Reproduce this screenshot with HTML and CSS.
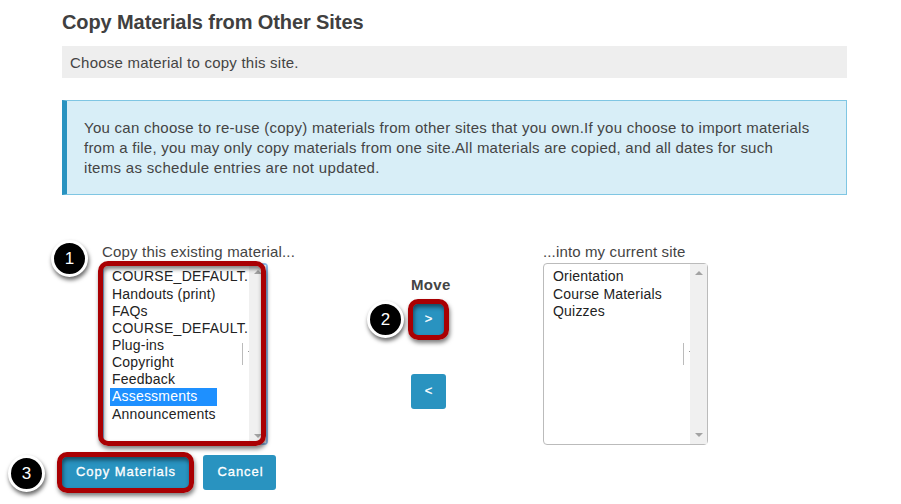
FILE: index.html
```html
<!DOCTYPE html>
<html lang="en">
<head>
<meta charset="utf-8">
<title>Copy Materials from Other Sites</title>
<link rel="stylesheet" href="styles.css">
</head>
<body>
<main class="page">
  <h1>Copy Materials from Other Sites</h1>
  <p class="instruction">Choose material to copy this site.</p>
  <div class="info">You can choose to re-use (copy) materials from other sites that you own.If you choose to import materials<br><span class="snug">from a file, you may only copy materials from one site.All materials are copied, and all dates for such</span><br><span class="loose">items as schedule entries are not updated.</span></div>
  <div class="transfer">
    <section class="source">
      <div class="label">Copy this existing material...</div>
      <div class="list focused">
        <ul class="options">
          <li class="long">COURSE_DEFAULT.</li>
          <li>Handouts (print)</li>
          <li>FAQs</li>
          <li class="long">COURSE_DEFAULT.</li>
          <li>Plug-ins</li>
          <li>Copyright</li>
          <li>Feedback</li>
          <li class="selected">Assessments</li>
          <li>Announcements</li>
        </ul>
        <div class="divider"></div>
        <div class="scrollbar"><i class="up"></i><i class="down"></i></div>
        <div class="highlight list-highlight"></div>
        <div class="badge badge-one">1</div>
      </div>
    </section>
    <section class="move">
      <div class="move-title">Move</div>
      <div class="button square">&gt;
        <div class="highlight move-highlight"></div>
        <div class="badge badge-two">2</div>
      </div>
      <div class="button square back">&lt;</div>
    </section>
    <section class="target">
      <div class="label into">...into my current site</div>
      <div class="list">
        <ul class="options">
          <li>Orientation</li>
          <li>Course Materials</li>
          <li>Quizzes</li>
        </ul>
        <div class="divider"></div>
        <div class="scrollbar"><i class="up"></i><i class="down"></i></div>
      </div>
    </section>
  </div>
  <div class="actions">
    <div class="button copy"><span>Copy Materials</span>
      <div class="highlight copy-highlight"></div>
      <div class="badge badge-three">3</div>
    </div>
    <div class="button cancel">Cancel</div>
  </div>
</main>
</body>
</html>
```
FILE: styles.css
```css
* { box-sizing: border-box; }
body {
  margin: 0;
  background: #fff;
  color: #444;
  font: 15px/20px "Liberation Sans", Arial, sans-serif;
  letter-spacing: 0.26px;
  height: 504px;
  overflow: hidden;
}
.page { width: 785px; margin-left: 62px; padding-top: 10px; }
h1 { margin: 0 0 12px; font-size: 20px; line-height: 24px; letter-spacing: -0.1px; color: #404040; white-space: nowrap; }
.instruction { margin: 0 0 22px; height: 32px; padding: 7px 8px; background: #eee; letter-spacing: 0.23px; }
.info {
  height: 95px;
  padding: 17px 0 0 17px;
  background: #d8eef7;
  border: 1px solid #7fc6e3;
  border-left: 5px solid #2993c0;
  white-space: nowrap;
}
.snug { letter-spacing: 0.23px; }
.loose { letter-spacing: 0.31px; }
.transfer { display: flex; margin-top: 47px; padding-left: 40px; height: 203px; }
.source { width: 309px; }
.move { width: 132px; }
.target { width: 165px; }
.label { height: 21px; letter-spacing: 0.18px; white-space: nowrap; }
.into { letter-spacing: 0.14px; }
.list {
  position: relative;
  display: flex;
  justify-content: flex-end;
  width: 165px;
  height: 182px;
  border: 1px solid #bbb;
  border-radius: 4px;
}
.focused { width: 166px; border: 2px solid #8fbcec; }
.options {
  flex: 1;
  min-width: 0;
  margin: 0;
  padding: 4px 0 0 8px;
  list-style: none;
  color: #222;
  font-size: 14px;
  line-height: 17.2px;
  letter-spacing: 0.2px;
  white-space: nowrap;
}
.focused .options { padding: 3px 0 0 6px; }
.options li { width: 107px; padding-left: 1px; }
.options li:nth-child(2), .options li:nth-child(3) { position: relative; top: 0.5px; }
.focused li { padding-left: 2px; }
.options .long { width: auto; letter-spacing: 0.28px; }
.options .selected { background: #1e90ff; color: #fff; }
.scrollbar {
  display: flex;
  flex-direction: column;
  justify-content: space-between;
  align-items: center;
  width: 17px;
  padding: 7px 0;
  background: #f0f0f0;
}
.scrollbar i { border: 4px solid transparent; }
.up { border-top: 0 !important; border-bottom-color: #a3a3a3 !important; }
.down { border-bottom: 0 !important; border-top-color: #a3a3a3 !important; }
.focused .scrollbar { padding: 5px 0; }
.divider { position: relative; width: 7px; height: 22px; margin-top: 79px; border-left: 1px solid #bbb; }
.focused .divider { margin-top: 78px; }
.divider::after { content: ""; position: absolute; right: 0; top: 8px; width: 1px; height: 1px; background: #999; }
.move-title { margin: 33px 0 7px; font-weight: bold; letter-spacing: 0.3px; }
.button {
  position: relative;
  height: 35px;
  border-radius: 3px;
  background: #2993c0;
  color: #fff;
  font-size: 13px;
  line-height: 34px;
  letter-spacing: 0.9px;
  text-align: center;
  white-space: nowrap;
  -webkit-text-stroke: 0.3px #fff;
}
.square { width: 35px; padding-left: 1px; }
.back { margin-top: 37px; }
.actions { display: flex; gap: 14px; margin-top: 10px; }
.copy { width: 127px; padding-left: 1px; letter-spacing: 0.95px; }
.cancel { width: 73px; padding-left: 2px; }
.highlight {
  position: absolute;
  border: 5px solid #a90003;
  border-radius: 10px;
  box-shadow: 1px 3px 4px rgba(0,0,0,.5), inset 1px 3px 4px rgba(0,0,0,.5);
}
.list-highlight { left: -6px; top: -4px; width: 168px; height: 185px; }
.move-highlight { left: -3px; top: -3px; width: 41px; height: 41px; }
.copy-highlight { left: -5px; top: -3px; width: 137px; height: 41px; }
.badge {
  position: absolute;
  width: 37px;
  height: 37px;
  border: 3px solid #fff;
  border-radius: 50%;
  background: #000;
  color: #fff;
  font-size: 17px;
  line-height: 31px;
  letter-spacing: 0;
  text-align: center;
  -webkit-text-stroke: 0;
  box-shadow: 1px 3px 4px rgba(0,0,0,.6);
}
.badge-one { left: -53px; top: -25px; }
.badge-two { left: -44px; top: -1px; }
.badge-three { left: -54px; top: 0; }
```
